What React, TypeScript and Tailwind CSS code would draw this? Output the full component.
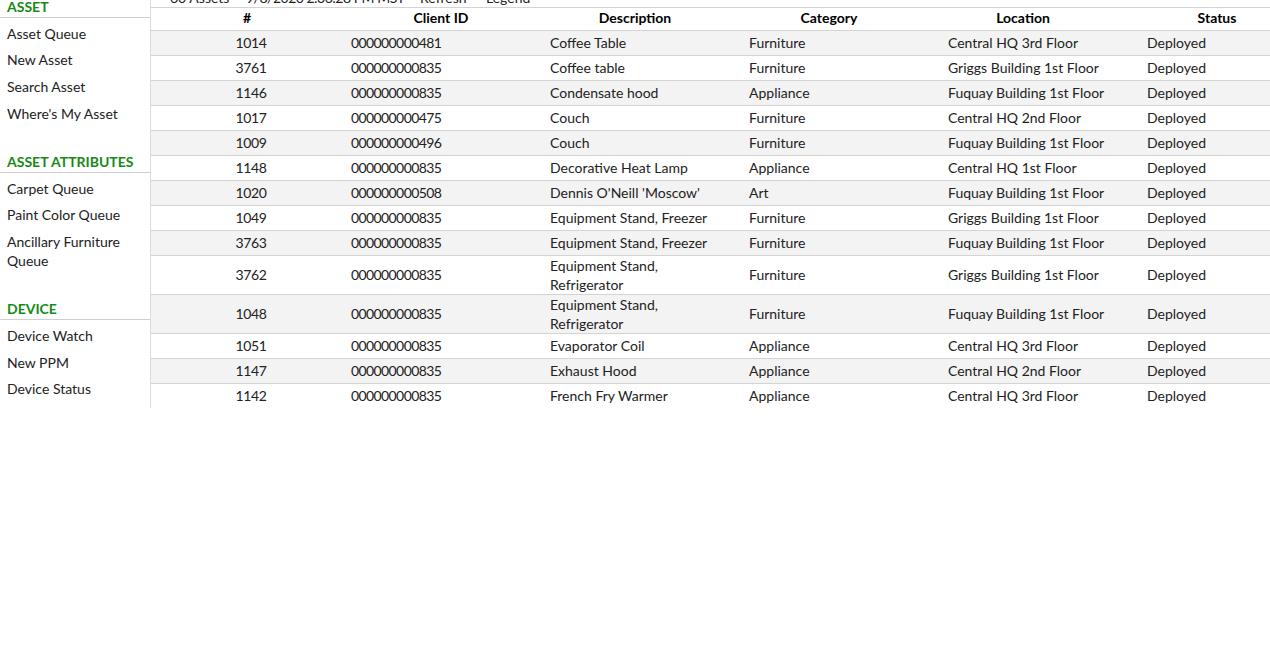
const sections = [
  { title: 'ASSET', items: ['Asset Queue', 'New Asset', 'Search Asset', "Where's My Asset"] },
  { title: 'ASSET ATTRIBUTES', items: ['Carpet Queue', 'Paint Color Queue', 'Ancillary Furniture Queue'] },
  { title: 'DEVICE', items: ['Device Watch', 'New PPM', 'Device Status'] },
]

const rows = [
  ['1014', '000000000481', 'Coffee Table', 'Furniture', 'Central HQ 3rd Floor', 'Deployed'],
  ['3761', '000000000835', 'Coffee table', 'Furniture', 'Griggs Building 1st Floor', 'Deployed'],
  ['1146', '000000000835', 'Condensate hood', 'Appliance', 'Fuquay Building 1st Floor', 'Deployed'],
  ['1017', '000000000475', 'Couch', 'Furniture', 'Central HQ 2nd Floor', 'Deployed'],
  ['1009', '000000000496', 'Couch', 'Furniture', 'Fuquay Building 1st Floor', 'Deployed'],
  ['1148', '000000000835', 'Decorative Heat Lamp', 'Appliance', 'Central HQ 1st Floor', 'Deployed'],
  ['1020', '000000000508', "Dennis O'Neill 'Moscow'", 'Art', 'Fuquay Building 1st Floor', 'Deployed'],
  ['1049', '000000000835', 'Equipment Stand, Freezer', 'Furniture', 'Griggs Building 1st Floor', 'Deployed'],
  ['3763', '000000000835', 'Equipment Stand, Freezer', 'Furniture', 'Fuquay Building 1st Floor', 'Deployed'],
  ['3762', '000000000835', 'Equipment Stand, Refrigerator', 'Furniture', 'Griggs Building 1st Floor', 'Deployed'],
  ['1048', '000000000835', 'Equipment Stand, Refrigerator', 'Furniture', 'Fuquay Building 1st Floor', 'Deployed'],
  ['1051', '000000000835', 'Evaporator Coil', 'Appliance', 'Central HQ 3rd Floor', 'Deployed'],
  ['1147', '000000000835', 'Exhaust Hood', 'Appliance', 'Central HQ 2nd Floor', 'Deployed'],
  ['1142', '000000000835', 'French Fry Warmer', 'Appliance', 'Central HQ 3rd Floor', 'Deployed'],
]

const headers = ['#', 'Client ID', 'Description', 'Category', 'Location', 'Status']

const Sidebar = () => (
  <div className="w-[151px] shrink-0 border-r border-[#dcdcdc] pt-[8.5px]">
    {sections.map((s, i) => (
      <div key={s.title} className={i > 0 ? 'mt-[24.5px]' : ''}>
        <div className="border-b border-[#cfcfcf] pb-[1px] pl-[7px] font-bold leading-[19px] text-[#168a16]">
          {s.title}
        </div>
        <div className="mt-[3px]">
          {s.items.map((item) => (
            <div key={item} className="py-[4px] pl-[7px] pr-2 leading-[18.67px] text-[#222]">
              {item}
            </div>
          ))}
        </div>
      </div>
    ))}
  </div>
)

const AssetTable = () => (
  <div className="min-w-0 flex-1">
    {/* toolbar, mostly scrolled out of view */}
    <div className="flex h-[19px] pl-[19px] leading-[19px] text-[#222]">
      <span className="w-[76px]">60 Assets</span>
      <span className="w-[174px] tracking-[-0.5px]">9/8/2020 2:36:28 PM MST</span>
      <span className="w-[66px]">Refresh</span>
      <span>Legend</span>
    </div>
    <div className="ml-[-1px] overflow-hidden border-y border-[#d4d4d4]">
      <div className="grid w-[1166px] grid-cols-[repeat(6,194px)] pb-[2.5px] font-bold leading-[19px] text-black">
        {headers.map((h) => (
          <div key={h} className="text-center">{h}</div>
        ))}
      </div>
    </div>
    {rows.map((r, i) => (
      <div
        key={r[0]}
        className={`grid grid-cols-[200px_199px_199px_199px_199px_1fr] leading-[19px] text-[#222] ${
          i % 2 === 0 ? 'bg-[#f3f3f3]' : 'bg-white'
        } ${i < rows.length - 1 ? 'border-b border-[#d4d4d4]' : ''}`}
      >
        <div className="flex min-h-[24px] items-center justify-center tracking-[-0.4px]">{r[0]}</div>
        <div className="flex min-h-[24px] items-center tracking-[-0.6px]">{r[1]}</div>
        <div className="flex min-h-[24px] items-center">
          <span className="max-w-[175px]">{r[2]}</span>
        </div>
        <div className="flex min-h-[24px] items-center">{r[3]}</div>
        <div className="flex min-h-[24px] items-center">{r[4]}</div>
        <div className="flex min-h-[24px] items-center">{r[5]}</div>
      </div>
    ))}
  </div>
)

export default function App() {
  return (
    <div className="h-[648px] overflow-hidden bg-white font-['Lato',sans-serif] text-[14px]">
      <div className="mt-[-12px] flex items-stretch">
        <Sidebar />
        <AssetTable />
      </div>
    </div>
  )
}
